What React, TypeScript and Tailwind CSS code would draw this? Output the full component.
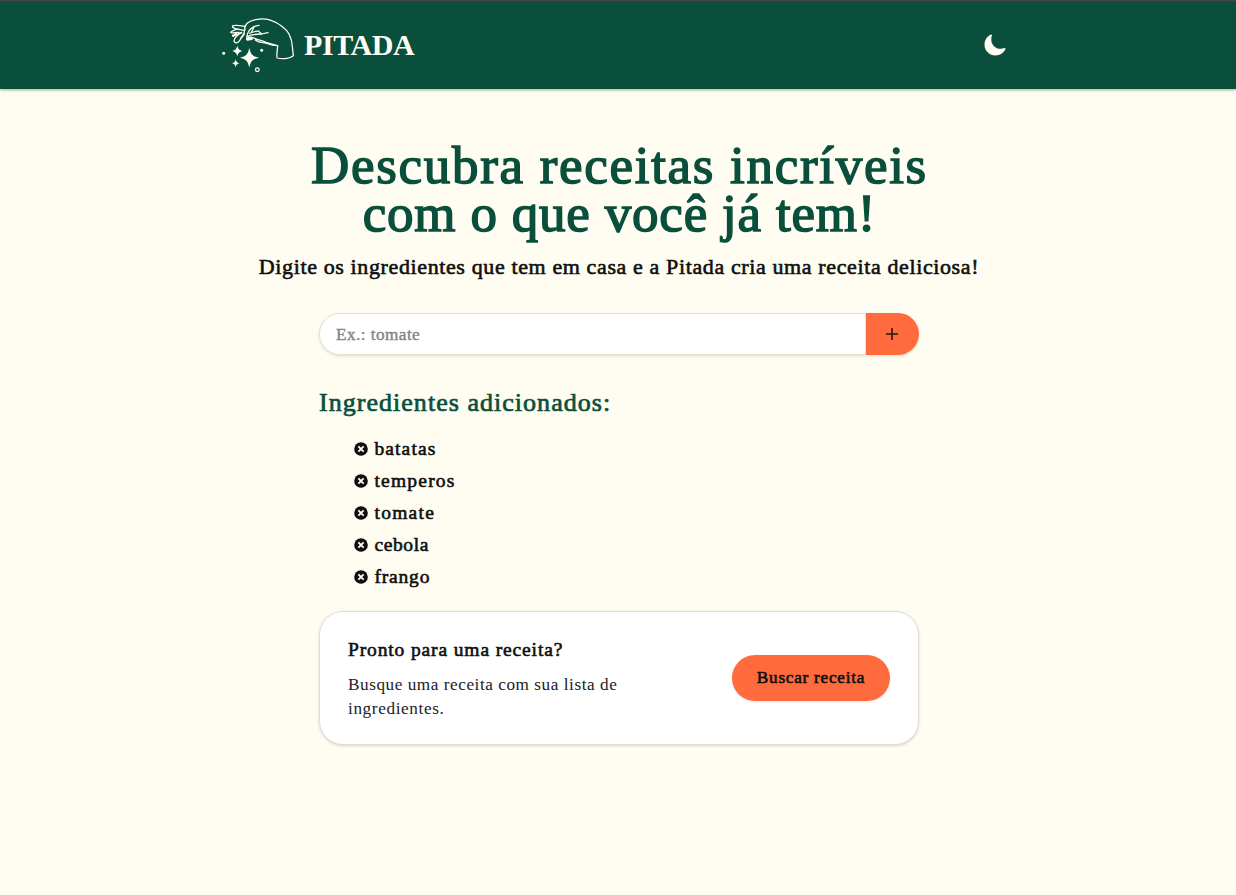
import { IoMoon } from "react-icons/io5";

type Ingredient = { name: string; tracking: string };

const ingredients: Ingredient[] = [
  { name: "batatas", tracking: "tracking-[1.1px]" },
  { name: "temperos", tracking: "tracking-[1.2px]" },
  { name: "tomate", tracking: "tracking-[1.25px]" },
  { name: "cebola", tracking: "tracking-[0.6px]" },
  { name: "frango", tracking: "tracking-[0.8px]" },
];

function PinchLogo() {
  return (
    <svg
      viewBox="18 18 222 174"
      className="h-[58px] w-[74px] shrink-0"
      fill="none"
      stroke="#fffdf1"
      strokeWidth="3.8"
      strokeLinecap="round"
      strokeLinejoin="round"
      aria-hidden="true"
    >
      {/* back of the hand and cuff */}
      <path d="M89 57C89 43 103 33 122 29C142 25 158 26 170 32C190 39 214 56 222 72C230 88 232 98 232 110L235 136C231 145 204 148 187 144C183 141 187 126 188 107C178 107 167 105 158 101" />
      {/* fingers */}
      <path d="M92 49C78 47 64 44 54 47C50 50 54 54 62 56L86 61" />
      <path d="M68 57C60 60 50 62 47 67C50 71 62 66 72 67" />
      <path d="M64 70C54 75 50 78 54 79C60 77 66 71 80 67" />
      <path d="M80 68C68 74 58 83 57 93C60 101 68 99 72 94C77 88 80 80 86 72L90 58" />
      <path d="M77 85C82 82 85 76 88 71" />
      {/* knuckles and creases */}
      <path d="M132 46C118 48 106 54 100 66C96 74 94 80 96 86" />
      <path d="M116 54L110 65" />
      <path d="M97 80C109 73 124 72 139 72L159 68" />
      <path d="M104 70C112 65 122 64 130 63L140 72" />
      {/* thumb */}
      <path d="M96 87C102 79 112 81 121 86C133 91 146 91 158 100C148 99 131 98 121 90" />
      <path d="M97 88L110 86" strokeWidth="8" />
      <path d="M155 98L184 106" />
      {/* sparkles */}
      <g fill="#fffdf1" stroke="none">
        <path d="M103 113C107 133 113 139 132 143C113 147 107 153 103 173C99 153 93 147 74 143C93 139 99 133 103 113Z" />
        <path d="M67 107C70 118 73 120 83 123C73 126 70 128 67 139C64 128 61 126 51 123C61 120 64 118 67 107Z" />
        <path d="M62 148C64 156 66 158 73 160C66 162 64 164 62 172C60 164 58 162 51 160C58 158 60 156 62 148Z" />
        <circle cx="26" cy="130" r="4.5" />
        <circle cx="140" cy="121" r="4.5" />
      </g>
      <circle cx="127" cy="179" r="5.5" />
    </svg>
  );
}

function RemoveIcon() {
  return (
    <svg viewBox="0 0 14 14" className="size-[14px] shrink-0" aria-hidden="true">
      <circle cx="7" cy="7" r="6.8" fill="#0f0f0f" />
      <path d="M4.4 4.4L9.6 9.6M9.6 4.4L4.4 9.6" stroke="#fffdf1" strokeWidth="1.9" />
    </svg>
  );
}

function Header() {
  return (
    <header className="relative h-[89px] border-t border-[#444444] bg-[#0a4f3c] shadow-[0_1px_3px_rgba(0,0,0,0.35)]">
      <div className="mx-auto flex h-[88px] w-[800px] items-center justify-between pr-[11px] pl-[3px]">
        <div className="flex items-center">
          <PinchLogo />
          <span className="pl-[9px] text-[30px] leading-8 font-bold tracking-[-0.4px] text-[#fffdf1]">
            PITADA
          </span>
        </div>
        <button type="button" aria-label="Tema">
          <IoMoon className="size-6 text-[#fffdf1]" />
        </button>
      </div>
    </header>
  );
}

export default function App() {
  return (
    <div className="min-h-[895px] bg-[#fffdf1] font-['Liberation_Serif',serif] text-[#0f0f0f]">
      <Header />
      <main className="flex flex-col items-center pt-[52px] pl-[2px]">
        <h1 className="flex flex-col items-center text-[53px] leading-12 whitespace-nowrap text-[#0a4f3c] [-webkit-text-stroke:1.5px_#0a4f3c]">
          <span className="pl-px tracking-[1.7px]">Descubra receitas incríveis</span>
          <span className="pl-px tracking-[0.8px]">com o que você já tem!</span>
        </h1>
        <p className="mt-4 text-[22px] leading-7 tracking-[0.62px] whitespace-nowrap [-webkit-text-stroke:0.6px_#0f0f0f]">
          Digite os ingredientes que tem em casa e a Pitada cria uma receita deliciosa!
        </p>

        <div className="flex w-[600px] flex-col">
          <form className="mt-8 flex h-[42px] rounded-full shadow-[0_1px_3px_rgba(0,0,0,0.14)]">
            <input
              type="text"
              placeholder="Ex.: tomate"
              className="min-w-0 flex-1 rounded-l-full border border-[#e5dfd3] bg-white px-4 pt-0.5 text-[17.2px] tracking-[0.45px] outline-none placeholder:text-[#858585] placeholder:[-webkit-text-stroke:0.4px_#858585]"
            />
            <button
              type="button"
              aria-label="Adicionar"
              className="flex w-[53px] items-center justify-center rounded-r-full bg-[#ff6b3d] pr-0.5"
            >
              <svg viewBox="0 0 12 12" className="size-3" stroke="#2b1710" strokeWidth="1.6" aria-hidden="true">
                <path d="M6 0V12M0 6H12" />
              </svg>
            </button>
          </form>

          <h2 className="mt-8 text-[26px] leading-8 tracking-[1.03px] text-[#0a4f3c] [-webkit-text-stroke:0.7px_#0a4f3c]">
            Ingredientes adicionados:
          </h2>
          <ul className="mt-[14px] pl-[35px]">
            {ingredients.map((item) => (
              <li key={item.name} className="flex h-8 items-center gap-[6.5px] text-[19.5px] leading-8">
                <RemoveIcon />
                <span className={`${item.tracking} [-webkit-text-stroke:0.6px_#0f0f0f]`}>{item.name}</span>
              </li>
            ))}
          </ul>

          <section className="mt-[18px] flex h-[134px] items-center justify-between rounded-3xl border border-[#e5dfd3] bg-white px-7 shadow-[0_1px_3px_rgba(0,0,0,0.16)]">
            <div>
              <h3 className="text-[19.5px] leading-7 tracking-[0.87px] [-webkit-text-stroke:0.6px_#0f0f0f]">
                Pronto para uma receita?
              </h3>
              <p className="mt-2 flex flex-col pt-px text-[17.2px] leading-6 text-[#222222]">
                <span className="tracking-[0.55px]">Busque uma receita com sua lista de</span>
                <span className="tracking-[0.62px]">ingredientes.</span>
              </p>
            </div>
            <button
              type="button"
              className="h-[46px] w-[158px] rounded-full bg-[#ff6b3d] text-[17.2px] tracking-[0.75px] whitespace-nowrap shadow-[0_1px_3px_rgba(0,0,0,0.12)] [-webkit-text-stroke:0.6px_#0f0f0f]"
            >
              Buscar receita
            </button>
          </section>
        </div>
      </main>
    </div>
  );
}
